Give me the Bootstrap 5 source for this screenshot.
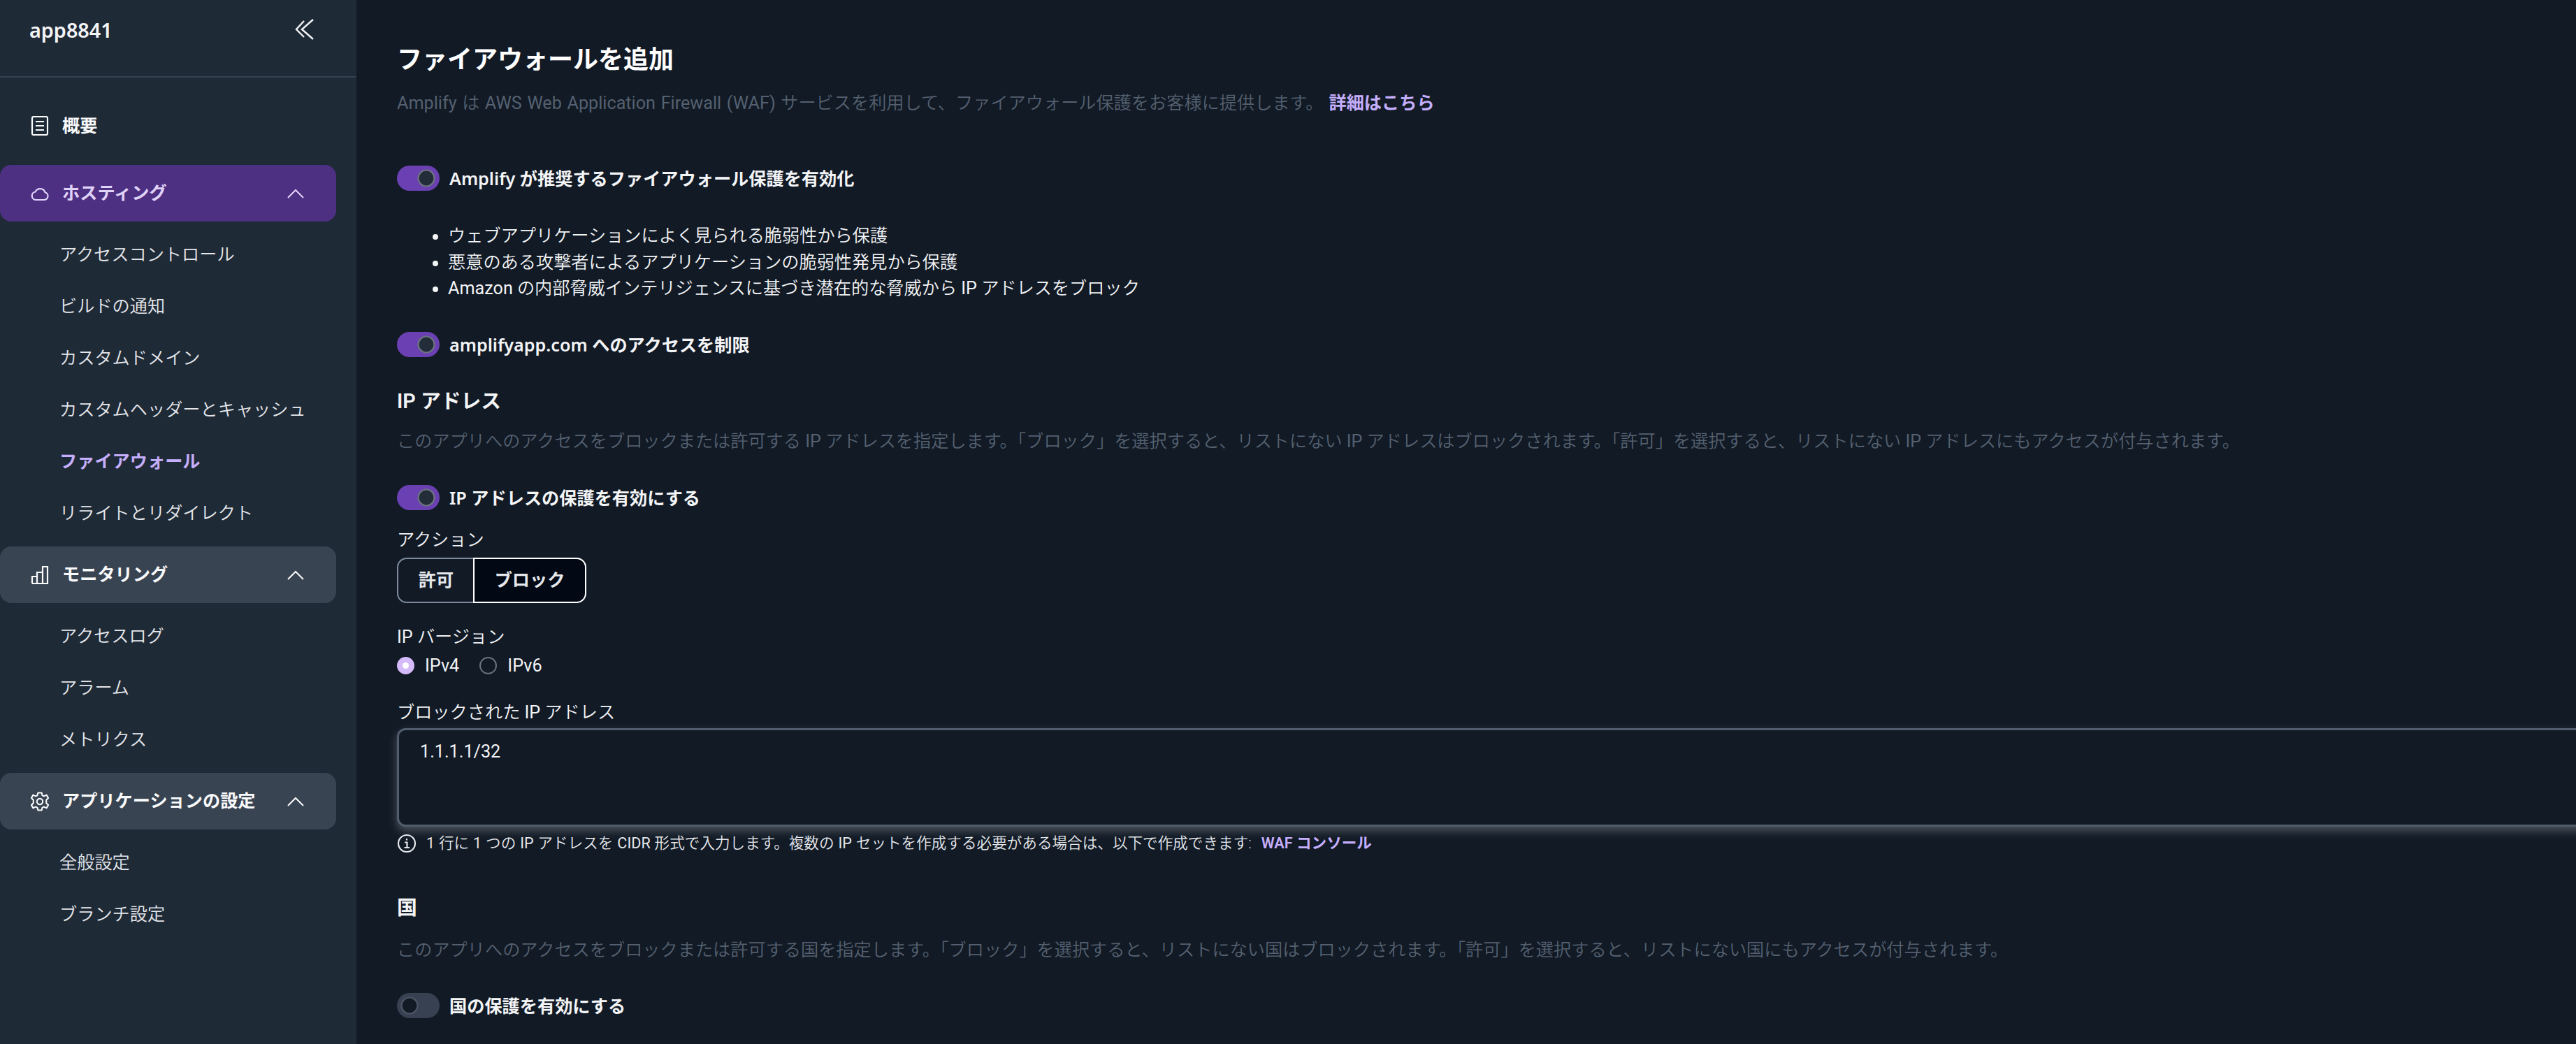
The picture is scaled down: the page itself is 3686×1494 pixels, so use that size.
<!DOCTYPE html>
<html lang="ja">
<head>
<meta charset="utf-8">
<title>ファイアウォールを追加</title>
<link href="https://cdn.jsdelivr.net/npm/bootstrap@5.3.0/dist/css/bootstrap.min.css" rel="stylesheet">
<style>
html,body{height:100%;overflow:hidden}
body{background:#111a25;color:#e5e7eb;font-family:Roboto,"Noto Sans CJK JP",sans-serif;font-size:25.2px}
.shell{height:1494px;width:3686px}
.side{width:510px;flex:none;background:#1f2a37;height:100%}
.side-head{height:111px;border-bottom:2px solid #374151;padding:24px 0 0 42px;position:relative}
.app-name{font-size:28.8px;font-weight:600;color:#f3f4f6;line-height:38px;font-family:"Noto Sans",sans-serif}
.collapse-btn{position:absolute;left:421px;top:27px;width:29px;height:30px;color:#f3f4f6}
.side-nav{padding-top:43px}
.side-item{width:481px;height:81px;border-radius:16px;padding:1px 44px 0;font-weight:600;color:#f9fafb;display:flex;align-items:center;text-decoration:none}
.side-item.first{height:52px;margin-bottom:30px}
.side-item.tone-p{background:#4e3083;color:#e0d3f8}
.side-item.tone-g{background:#394452}
.side-ico{width:26px;height:28px;flex:none;margin-right:19px;margin-top:-1px}
.side-chev{width:26px;height:16px;margin-left:auto;margin-right:1px;flex:none;margin-top:-1px}
.sub-list{padding:10px 0 11px 85px;list-style:none;margin:0}
.sub-list a{display:block;height:74px;line-height:76px;color:#e5e7eb;text-decoration:none;font-weight:350}
.sub-list a.on{color:#c5aefc;font-weight:600}
.body-pane{flex:1;min-width:0;overflow:hidden;padding:59px 0 0 568px;margin-left:-510px}
.pane-inner{width:3400px;font-weight:350}
.lat{font-weight:400}
.ttl{font-size:36px;font-weight:600;line-height:50px;color:#fff;margin:0 0 -2px;padding-top:2px}
.h-sec{font-size:28.8px;font-weight:600;line-height:40px;color:#f3f4f6;margin:0 0 -1px;padding-top:1px}
.muted-line{color:#556070;line-height:36px;margin:0 0 -2px;padding-top:2px;white-space:nowrap}
.intro{word-spacing:1.4px}
.lnk{color:#c5aefc;font-weight:600;text-decoration:none;margin-left:8px;word-spacing:0}
.sw-row{display:flex;align-items:center;margin:0;padding:0;min-height:36px;height:36px}
.sw-row .form-check-input,.sw-row .form-check-input:checked{width:61px;height:36px;margin:0;border:0;border-radius:18px;background-color:#6b40b3;background-position:right center;background-size:36px 36px;background-repeat:no-repeat;box-shadow:none;float:none;
background-image:url("data:image/svg+xml,%3csvg xmlns='http://www.w3.org/2000/svg' viewBox='0 0 36 36'%3e%3ccircle cx='17' cy='18' r='11.500' fill='%23232d3a' stroke='%236b7280' stroke-width='2.200'/%3e%3c/svg%3e")}
.sw-row .form-check-input.off{background-color:#374151;background-position:left center;
background-image:url("data:image/svg+xml,%3csvg xmlns='http://www.w3.org/2000/svg' viewBox='0 0 36 36'%3e%3ccircle cx='18' cy='18' r='11.500' fill='%23111a25' stroke='%234b5563' stroke-width='2.200'/%3e%3c/svg%3e")}
.sw-row label{margin-left:14px;font-family:"Noto Sans","Noto Sans CJK JP",sans-serif;font-weight:600;color:#f3f4f6;line-height:36px}
.ticks{margin:0 0 -2px;padding:2px 0 0 73px;line-height:37.7px;color:#f3f4f6}
.fld{line-height:36px;color:#f3f4f6;margin-bottom:-2px;padding-top:2px;display:block}
.seg .btn{height:65px;font-size:25.2px;font-weight:600;color:#e5e7eb;padding:0;white-space:nowrap;border:2.5px solid #7d8a9c;background:transparent;border-radius:14px}
.seg .btn.one{width:110px;flex:none;border-right:0}
.seg .btn.two{width:162px;flex:none;background:#020814;border-color:#fff;margin-left:0;border-radius:0 14px 14px 0}
.radio-row{display:flex;align-items:center;height:36px}
.radio-row .form-check-input{width:25px;height:25px;margin:0;background-color:transparent;border:2.5px solid #6b7280;box-shadow:none;float:none}
.radio-row .form-check-input:checked{background-color:#d6bbfb;border-color:#d6bbfb;background-image:url("data:image/svg+xml,%3csvg xmlns='http://www.w3.org/2000/svg' viewBox='-4 -4 8 8'%3e%3ccircle r='1.700' fill='%23fff'/%3e%3c/svg%3e")}
.radio-row label{margin:0 29px 0 15px;color:#f3f4f6;padding-top:2px;font-weight:400}
.ta{display:block;width:100%;height:141px;background:#111a25;color:#f3f4f6;border:3px solid #515d6d;border-radius:12px;font-size:25.2px;font-weight:400;padding:13px 30px;resize:none;box-shadow:0 6px 14px rgba(255,255,255,.25);line-height:36px}
.ta:focus{background:#111a25;color:#f3f4f6}
.hint{font-size:21.6px;line-height:30px;color:#e5e7eb;display:flex;align-items:center;word-spacing:.6px}
.hint svg{width:28px;height:28px;margin-right:14px;flex:none}
.hint .lnk{margin-left:14px}
.m19{margin-top:19px}.m22{margin-top:22px}.m23{margin-top:23px}.m29{margin-top:29px}.m30{margin-top:30px}
.m42{margin-top:42px}.m44{margin-top:44px}.m45{margin-top:45px}.m46{margin-top:46px}.m56{margin-top:56px}.m73{margin-top:73px}.m6{margin-top:6px}.m9{margin-top:9px}
</style>
</head>
<body>
<div class="shell d-flex">
  <aside class="side position-relative" style="z-index:1">
    <div class="side-head">
      <div class="app-name">app8841</div>
      <svg class="collapse-btn" viewBox="0 0 29 30" fill="none" stroke="currentColor" stroke-width="2.4"><path d="M14 3 3 15l11 11"/><path d="M27 1 11 15l16 14"/></svg>
    </div>
    <nav class="side-nav">
      <a class="side-item first" href="#"><svg class="side-ico" viewBox="0 0 26 28" fill="none" stroke="currentColor" stroke-width="2.2"><rect x="2" y="1" width="22" height="26" rx="2"/><path d="M7 8h12M7 14h12M7 20h12"/></svg>概要</a>
      <a class="side-item tone-p" href="#"><svg class="side-ico" viewBox="0 0 26 28" fill="none" stroke="currentColor" stroke-width="2.2"><path d="M7 23h12a5.500 5.500 0 0 0 1.500-10.800A7.500 7.500 0 0 0 6.600 11.500 5.800 5.800 0 0 0 7 23Z"/></svg>ホスティング<svg class="side-chev" viewBox="0 0 26 16" fill="none" stroke="currentColor" stroke-width="2"><path d="M2 14 13 3l11 11"/></svg></a>
      <ul class="sub-list">
        <li><a href="#">アクセスコントロール</a></li>
        <li><a href="#">ビルドの通知</a></li>
        <li><a href="#">カスタムドメイン</a></li>
        <li><a href="#">カスタムヘッダーとキャッシュ</a></li>
        <li><a class="on" href="#">ファイアウォール</a></li>
        <li><a href="#">リライトとリダイレクト</a></li>
      </ul>
      <a class="side-item tone-g" href="#"><svg class="side-ico" viewBox="0 0 26 28" fill="none" stroke="currentColor" stroke-width="2.2"><path d="M2 26V16h7v10M9 26V10h8v16M17 26V2h7v24H2"/></svg>モニタリング<svg class="side-chev" viewBox="0 0 26 16" fill="none" stroke="currentColor" stroke-width="2"><path d="M2 14 13 3l11 11"/></svg></a>
      <ul class="sub-list">
        <li><a href="#">アクセスログ</a></li>
        <li><a href="#">アラーム</a></li>
        <li><a href="#">メトリクス</a></li>
      </ul>
      <a class="side-item tone-g" href="#"><svg class="side-ico" viewBox="1.500 1.500 25 25" fill="none" stroke="currentColor" stroke-width="2" stroke-linejoin="round"><circle cx="14" cy="14" r="4"/><path d="M11.500 2h5l1 3.700 2.200 1 3.500-1.700 2.500 4.300-2.800 2.600v4.200l2.800 2.600-2.500 4.300-3.500-1.700-2.200 1-1 3.700h-5l-1-3.700-2.200-1-3.500 1.700-2.500-4.300 2.800-2.600v-4.200L2.300 9.300l2.500-4.300 3.500 1.700 2.200-1Z"/></svg>アプリケーションの設定<svg class="side-chev" viewBox="0 0 26 16" fill="none" stroke="currentColor" stroke-width="2"><path d="M2 14 13 3l11 11"/></svg></a>
      <ul class="sub-list">
        <li><a href="#">全般設定</a></li>
        <li><a href="#">ブランチ設定</a></li>
      </ul>
    </nav>
  </aside>
  <main class="body-pane">
    <div class="pane-inner">
      <h1 class="ttl">ファイアウォールを追加</h1>
      <p class="muted-line intro m19"><span class="lat">Amplify</span> は <span class="lat">AWS Web Application Firewall (WAF)</span> サービスを利用して、ファイアウォール保護をお客様に提供します。<a class="lnk" href="#">詳細はこちら</a></p>
      <div class="form-check form-switch sw-row m73"><input class="form-check-input" type="checkbox" id="s1" checked><label class="form-check-label" for="s1">Amplify が推奨するファイアウォール保護を有効化</label></div>
      <ul class="ticks m44">
        <li>ウェブアプリケーションによく見られる脆弱性から保護</li>
        <li>悪意のある攻撃者によるアプリケーションの脆弱性発見から保護</li>
        <li><span class="lat">Amazon</span> の内部脅威インテリジェンスに基づき潜在的な脅威から <span class="lat">IP</span> アドレスをブロック</li>
      </ul>
      <div class="form-check form-switch sw-row m45"><input class="form-check-input" type="checkbox" id="s2" checked><label class="form-check-label" for="s2">amplifyapp.com へのアクセスを制限</label></div>
      <h2 class="h-sec m42">IP アドレス</h2>
      <p class="muted-line m19">このアプリへのアクセスをブロックまたは許可する <span class="lat">IP</span> アドレスを指定します。「ブロック」を選択すると、リストにない <span class="lat">IP</span> アドレスはブロックされます。「許可」を選択すると、リストにない <span class="lat">IP</span> アドレスにもアクセスが付与されます。</p>
      <div class="form-check form-switch sw-row m46"><input class="form-check-input" type="checkbox" id="s3" checked><label class="form-check-label" for="s3">IP アドレスの保護を有効にする</label></div>
      <span class="fld m23">アクション</span>
      <div class="btn-group seg m9" role="group"><button type="button" class="btn one">許可</button><button type="button" class="btn two">ブロック</button></div>
      <span class="fld m29"><span class="lat">IP</span> バージョン</span>
      <div class="radio-row m6">
        <input class="form-check-input" type="radio" name="ipv" id="r4" checked><label for="r4">IPv4</label>
        <input class="form-check-input" type="radio" name="ipv" id="r6"><label for="r6">IPv6</label>
      </div>
      <label class="fld m30" for="ta">ブロックされた <span class="lat">IP</span> アドレス</label>
      <textarea class="form-control ta m6" id="ta">1.1.1.1/32</textarea>
      <div class="hint m9"><svg viewBox="0 0 28 28" fill="none" stroke="currentColor" stroke-width="2.2"><circle cx="14" cy="14" r="12"/><path d="M11 12.500h3.500V20M10.500 20h7.500M14 7v2.500"/></svg><span><span class="lat">1</span> 行に <span class="lat">1</span> つの <span class="lat">IP</span> アドレスを <span class="lat">CIDR</span> 形式で入力します。複数の <span class="lat">IP</span> セットを作成する必要がある場合は、以下で作成できます:</span><a class="lnk" href="#">WAF コンソール</a></div>
      <h2 class="h-sec m56">国</h2>
      <p class="muted-line m22">このアプリへのアクセスをブロックまたは許可する国を指定します。「ブロック」を選択すると、リストにない国はブロックされます。「許可」を選択すると、リストにない国にもアクセスが付与されます。</p>
      <div class="form-check form-switch sw-row m45"><input class="form-check-input off" type="checkbox" id="s4"><label class="form-check-label" for="s4">国の保護を有効にする</label></div>
    </div>
  </main>
</div>
<script src="https://cdn.jsdelivr.net/npm/bootstrap@5.3.0/dist/js/bootstrap.bundle.min.js"></script>
</body>
</html>
